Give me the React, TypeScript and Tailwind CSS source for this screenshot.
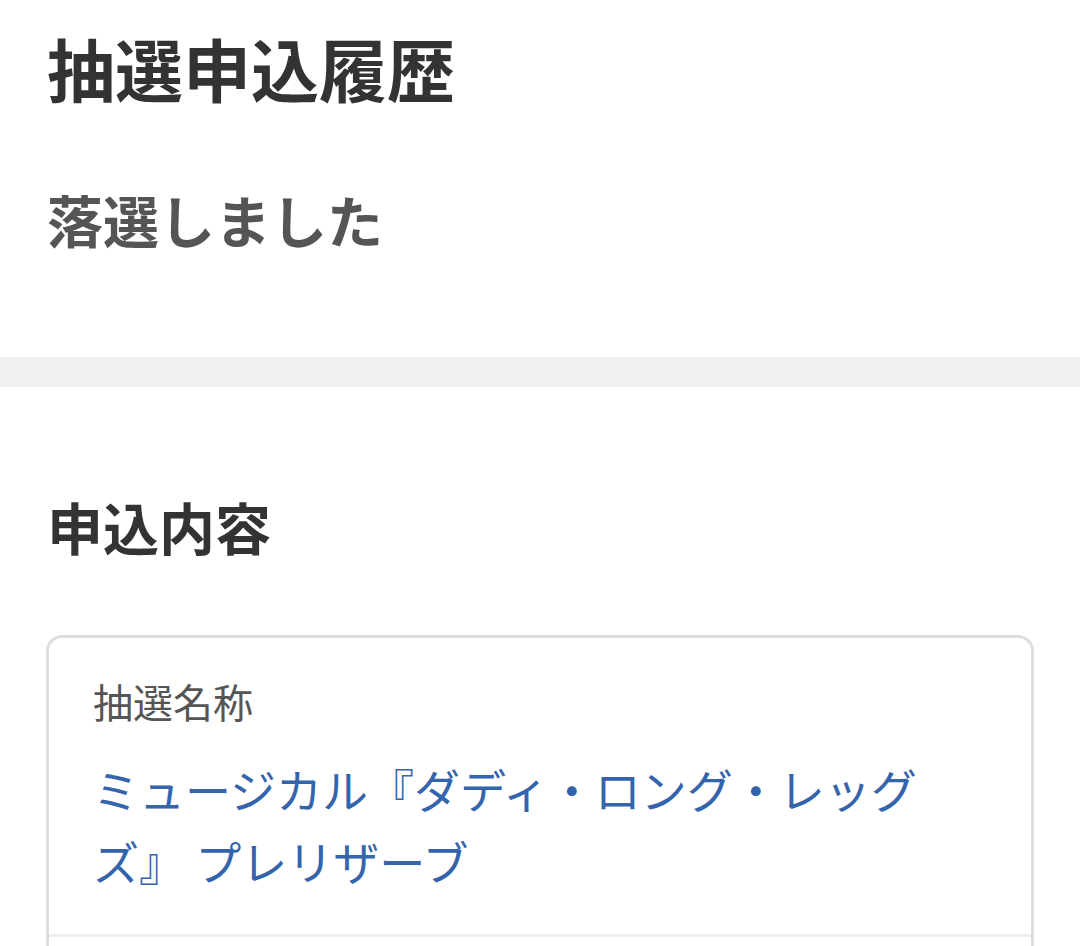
import React from 'react';

const font = { fontFamily: '"Noto Sans CJK JP", "Noto Sans", sans-serif' };

export default function App() {
  return (
    <div className="min-h-screen w-[1080px] bg-white [text-spacing-trim:space-all]" style={font}>
      <section className="px-[47px] pt-[17px] pb-[96px]">
        <h1 className="text-[68px] font-bold leading-[1.5] text-[#333333]">抽選申込履歴</h1>
        <p className="mt-[58px] text-[56px] font-bold leading-[1.5] text-[#555555]">落選しました</p>
      </section>

      <div className="h-[30px] bg-[#f0f0f0]" />

      <section className="px-[46px] pt-[97px]">
        <h2 className="pl-px text-[56px] font-bold leading-[1.5] text-[#333333]">申込内容</h2>

        <div className="mt-[67px] rounded-t-[16px] border-[3px] border-b-0 border-[#dddddd]">
          <div className="px-[44px] pt-[33px] pb-[38px]">
            <div className="text-[40px] leading-[1.5] text-[#555555]">抽選名称</div>
            <div className="mt-[21px] text-[46px] leading-[72px] text-[#3464ab]">
              ミュージカル『ダディ・ロング・レッグズ』 プレリザーブ
            </div>
          </div>
          <div className="h-[80px] border-t-[3px] border-[#eeeeee]" />
        </div>
      </section>
    </div>
  );
}
